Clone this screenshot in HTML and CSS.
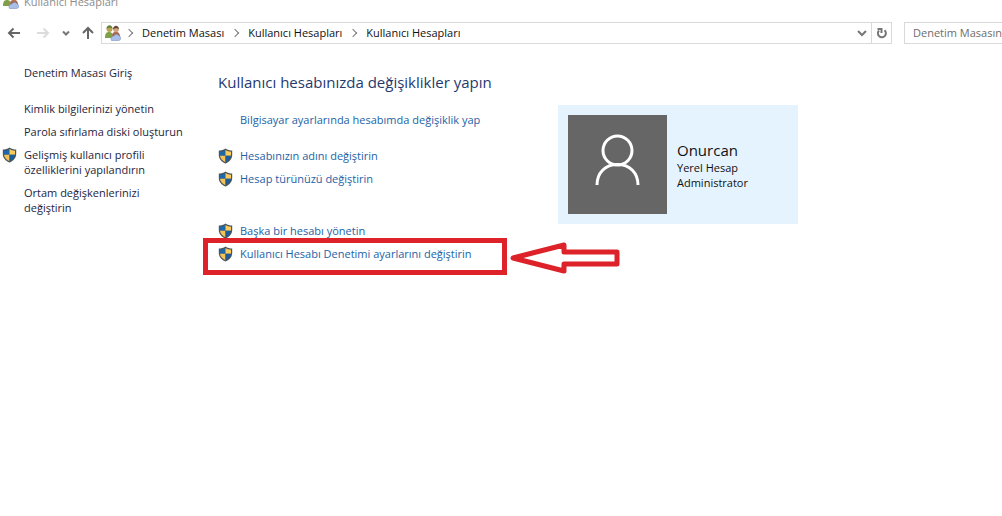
FILE: index.html
```html
<!DOCTYPE html>
<html lang="tr">
  <head>
    <meta charset="UTF-8">
    <meta name="viewport" content="width=device-width, initial-scale=1.0">
    <title>Kullanıcı Hesapları</title>
    <link rel="stylesheet" href="styles.css">
  </head>
  <body>
    <svg class="defs" aria-hidden="true">
      <symbol id="shield" viewBox="0 0 15 16">
        <path d="M7.500 .5C5.500 2 3 2.600.8 2.600V7c0 4 2.700 6.800 6.700 8.600C11.500 13.800 14.200 11 14.200 7V2.600C12 2.600 9.500 2 7.500.5z" fill="#4d565c"/>
        <path d="M7.500 2C5.800 3.200 4 3.600 2 3.700V7.800h5.500z" fill="#1e67a8"/>
        <path d="M7.500 2c1.700 1.200 3.500 1.600 5.500 1.700V7.800H7.500z" fill="#fbcb5c"/>
        <path d="M2 7.800h5.500v6.500C4.400 12.700 2.300 10.600 2 7.800z" fill="#f5c253"/>
        <path d="M13 7.800H7.500v6.500c3.100-1.600 5.200-3.700 5.500-6.500z" fill="#1b5c9b"/>
      </symbol>
      <symbol id="users" viewBox="0 0 16 16">
        <path d="M0 13c0-4 1-6 4-6s4 2 4 6z" fill="#7fa046"/>
        <circle cx="4.500" cy="4" r="3" fill="#b8a653"/>
        <path d="M1.500 4c0-5 6-5 6 0-1-1.500-4-2-6 0z" fill="#66803b"/>
        <path d="M7 12c0-4 1-5 4-5s4 2 4 5z" fill="#a66a4c"/>
        <circle cx="11" cy="4.500" r="2.800" fill="#d1a27d"/>
        <path d="M8 4.500c0-5 6-5 6 0-1-1.500-4-2-6 0z" fill="#69483a"/>
        <path d="M6.500 15.500C5 13 7 11 9 11c1-2 4-2 5 0 3 .5 2 4.500-.5 4.500z" fill="#a9bfe5" stroke="#7994c2" stroke-width=".6"/>
      </symbol>
    </svg>

    <header class="titlebar">
      <svg class="icon-users"><use href="#users"/></svg>
      <span>Kullanıcı Hesapları</span>
    </header>

    <div class="toolbar">
      <nav class="history">
        <button type="button" aria-label="Geri">
          <svg width="14" height="14" viewBox="0 0 14 14"><path d="M13 7H2M6.500 2.500L2 7l4.500 4.500" stroke="#666"/></svg>
        </button>
        <button type="button" aria-label="İleri" disabled>
          <svg width="14" height="14" viewBox="0 0 14 14"><path d="M1 7h11M7.500 2.500L12 7l-4.500 4.500" stroke="#dcdcdc"/></svg>
        </button>
        <button type="button" class="recent" aria-label="Son konumlar">
          <svg width="8" height="8" viewBox="0 0 8 8"><path d="M1 2.500l3 3 3-3" stroke="#777"/></svg>
        </button>
        <button type="button" aria-label="Yukarı">
          <svg width="14" height="14" viewBox="0 0 14 14"><path d="M7 13V2M2 7l5-5 5 5" stroke="#666"/></svg>
        </button>
      </nav>
      <div class="address">
        <svg class="icon-users"><use href="#users"/></svg>
        <ol class="crumbs">
          <li><a href="#">Denetim Masası</a></li>
          <li><a href="#">Kullanıcı Hesapları</a></li>
          <li><a href="#">Kullanıcı Hesapları</a></li>
        </ol>
        <button type="button" class="drop" aria-label="Önceki konumlar">
          <svg width="10" height="8" viewBox="0 0 10 8"><path d="M1 2l4 4 4-4" stroke="#777"/></svg>
        </button>
        <button type="button" class="refresh" aria-label="Yenile">
          <svg width="12" height="14" viewBox="0 0 12 14"><path d="M8.500 4.200A4 4 0 1 1 3 4.500M1.500 3h4v4" stroke="#777"/></svg>
        </button>
      </div>
      <input class="search" type="text" aria-label="Ara" placeholder="Denetim Masasında Ara">
    </div>

    <div class="page">
      <aside class="sidebar">
        <a class="home" href="#">Denetim Masası Giriş</a>
        <a href="#">Kimlik bilgilerinizi yönetin</a>
        <a href="#">Parola sıfırlama diski oluşturun</a>
        <a href="#"><svg class="shield"><use href="#shield"/></svg>Gelişmiş kullanıcı profili<br>özelliklerini yapılandırın</a>
        <a href="#">Ortam değişkenlerinizi<br>değiştirin</a>
      </aside>

      <main class="content">
        <h1>Kullanıcı hesabınızda değişiklikler yapın</h1>
        <ul class="tasks">
          <li><a href="#">Bilgisayar ayarlarında hesabımda değişiklik yap</a></li>
        </ul>
        <ul class="tasks">
          <li><svg class="shield"><use href="#shield"/></svg><a href="#">Hesabınızın adını değiştirin</a></li>
          <li><svg class="shield"><use href="#shield"/></svg><a href="#">Hesap türünüzü değiştirin</a></li>
        </ul>
        <ul class="tasks other">
          <li><svg class="shield"><use href="#shield"/></svg><a href="#">Başka bir hesabı yönetin</a></li>
          <li>
            <svg class="shield"><use href="#shield"/></svg><a href="#">Kullanıcı Hesabı Denetimi ayarlarını değiştirin</a>
            <span class="marker"></span>
            <svg class="arrow" width="110" height="34" viewBox="0 0 110 34"><path d="M3 17L54 4v7h53v12H54v7z"/></svg>
          </li>
        </ul>
      </main>

      <section class="account">
        <svg class="avatar" viewBox="0 0 99 99">
          <circle cx="49.500" cy="35.500" r="14.500"/>
          <path d="M29 70c0-12 8-20.500 20.500-20.500S70 58 70 70"/>
        </svg>
        <div>
          <h2>Onurcan</h2>
          <p>Yerel Hesap</p>
          <p>Administrator</p>
        </div>
      </section>
    </div>
  </body>
</html>
```
FILE: styles.css
```css
* {
  box-sizing: border-box;
}

body {
  margin: 0;
  background-color: #fff;
  color: #111;
  font-family: "Open Sans", "Noto Sans", sans-serif;
  font-size: 11px;
  line-height: 15px;
}

h1, h2, p, ul, ol {
  margin: 0;
  padding: 0;
  font-weight: normal;
  list-style: none;
}

a {
  color: inherit;
  text-decoration: none;
}

button {
  display: flex;
  align-items: center;
  justify-content: center;
  padding: 0;
  border: 0;
  background: none;
}

button svg {
  fill: none;
  stroke-width: 2;
}

.defs {
  position: absolute;
  width: 0;
  height: 0;
}

.icon-users {
  width: 16px;
  height: 16px;
  flex: none;
}

.shield {
  width: 15px;
  height: 16px;
  flex: none;
}

/* Title bar */
.titlebar {
  display: flex;
  align-items: flex-end;
  gap: 5px;
  height: 9px;
  padding-left: 3px;
  color: #8c8c8c;
  overflow: hidden;
}

/* Navigation bar */
.toolbar {
  display: flex;
  gap: 12px;
  height: 22px;
  margin-top: 13px;
  overflow: hidden;
}

.history {
  display: flex;
  align-items: center;
  gap: 15px;
  width: 101px;
  padding-left: 7px;
  margin-right: -12px;
  flex: none;
}

.history .recent {
  margin: 0 -4px 0 -3px;
}

.address {
  display: flex;
  align-items: center;
  flex: 1;
  border: 1px solid #d9d9d9;
  padding-left: 3px;
}

.crumbs {
  display: flex;
  flex: 1;
  padding-bottom: 1px;
}

.crumbs li {
  display: flex;
  align-items: center;
}

.crumbs li::before {
  content: "";
  width: 5px;
  height: 5px;
  margin: 0 10px 0 5px;
  border: solid #777;
  border-width: 1px 1px 0 0;
  transform: rotate(45deg);
}

.crumbs li + li::before {
  margin-left: 8px;
}

.drop {
  width: 18px;
}

.refresh {
  width: 20px;
  height: 20px;
  border-left: 1px solid #d9d9d9;
}

.search {
  width: 180px;
  margin-right: -82px;
  padding: 0 8px 1px;
  border: 1px solid #d9d9d9;
  font: inherit;
  flex: none;
}

.search::placeholder {
  color: #6d6d6d;
}

/* Page */
.page {
  display: flex;
  align-items: flex-start;
  padding-top: 21px;
}

.sidebar {
  display: flex;
  flex-direction: column;
  gap: 8px;
  width: 218px;
  padding-left: 2px;
  color: #1e1e3c;
  flex: none;
}

.sidebar a {
  position: relative;
  padding-left: 22px;
}

.sidebar .home {
  margin-bottom: 13px;
}

.sidebar .shield {
  position: absolute;
  left: 0;
  top: 0;
}

.content {
  width: 340px;
  padding-top: 6px;
  flex: none;
}

h1 {
  margin-bottom: 19px;
  color: #1f3a6e;
  font-size: 15px;
  line-height: 22px;
}

.tasks {
  display: flex;
  flex-direction: column;
  gap: 7px;
  margin-bottom: 20px;
  color: #1d62a5;
}

.tasks li {
  display: flex;
  gap: 7px;
  position: relative;
  line-height: 16px;
  white-space: nowrap;
}

.tasks li > a:first-child {
  margin-left: 22px;
}

.tasks.other {
  margin-top: 36px;
}

.marker {
  position: absolute;
  left: -15px;
  top: -8px;
  width: 304px;
  height: 37px;
  border: 5px solid #dd2229;
}

.arrow {
  position: absolute;
  left: 292px;
  top: -5px;
  fill: #fff;
  stroke: #dd2229;
  stroke-width: 5;
  stroke-linejoin: round;
}

.account {
  display: flex;
  align-items: center;
  gap: 10px;
  width: 240px;
  margin-top: 40px;
  padding: 10px;
  background-color: #e5f3fe;
  color: #111;
}

.avatar {
  width: 99px;
  height: 99px;
  background-color: #666;
  fill: none;
  stroke: #fff;
  stroke-width: 3;
  flex: none;
}

h2 {
  font-size: 15px;
  line-height: 20px;
}
```
